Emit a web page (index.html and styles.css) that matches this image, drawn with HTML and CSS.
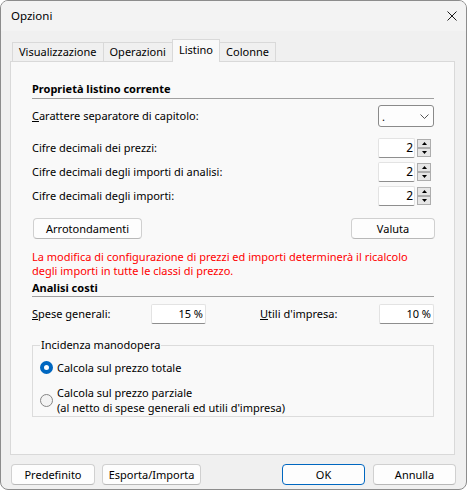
FILE: index.html
```html
<!DOCTYPE html>
<html lang="it">
<head>
<meta charset="utf-8">
<title>Opzioni</title>
<link rel="stylesheet" href="styles.css">
</head>
<body>
<div class="window">
  <div class="titlebar">
    <span class="title">Opzioni</span>
    <span class="close"><svg width="10" height="10" viewBox="0 0 10 10"><path d="M0.5 0.5L9.5 9.5M9.5 0.5L0.5 9.5" stroke="#1a1a1a" stroke-width="1"/></svg></span>
  </div>
  <div class="client">
    <div class="tabs">
      <div class="tab">Visualizzazione</div>
      <div class="tab">Operazioni</div>
      <div class="tab active">Listino</div>
      <div class="tab">Colonne</div>
    </div>
    <div class="panel">
      <div class="section-title">Proprietà listino corrente</div>
      <div class="row row-combo">
        <span><u>C</u>arattere separatore di capitolo:</span>
        <div class="combo"><span class="combo-value">.</span><svg width="9" height="5" viewBox="0 0 9 5"><path d="M0.5 0.5L4.5 4.5L8.5 0.5" fill="none" stroke="#555" stroke-width="1"/></svg></div>
      </div>
      <div class="spin-rows">
        <div class="row">
          <span>Cifre decimali dei prezzi:</span>
          <div class="spin"><div class="field spin-input">2</div><div class="spin-btns"><div class="spin-btn"><svg width="5" height="3" viewBox="0 0 5 3"><path d="M2.5 0L5 3H0Z" fill="#000"/></svg></div><div class="spin-btn"><svg width="5" height="3" viewBox="0 0 5 3"><path d="M0 0H5L2.5 3Z" fill="#000"/></svg></div></div></div>
        </div>
        <div class="row">
          <span>Cifre decimali degli importi di analisi:</span>
          <div class="spin"><div class="field spin-input">2</div><div class="spin-btns"><div class="spin-btn"><svg width="5" height="3" viewBox="0 0 5 3"><path d="M2.5 0L5 3H0Z" fill="#000"/></svg></div><div class="spin-btn"><svg width="5" height="3" viewBox="0 0 5 3"><path d="M0 0H5L2.5 3Z" fill="#000"/></svg></div></div></div>
        </div>
        <div class="row">
          <span>Cifre decimali degli importi:</span>
          <div class="spin"><div class="field spin-input">2</div><div class="spin-btns"><div class="spin-btn"><svg width="5" height="3" viewBox="0 0 5 3"><path d="M2.5 0L5 3H0Z" fill="#000"/></svg></div><div class="spin-btn"><svg width="5" height="3" viewBox="0 0 5 3"><path d="M0 0H5L2.5 3Z" fill="#000"/></svg></div></div></div>
        </div>
      </div>
      <div class="row row-buttons">
        <button class="btn btn-arr">Arrotondamenti</button>
        <button class="btn btn-valuta">Valuta</button>
      </div>
      <p class="warning">La modifica di configurazione di prezzi ed importi determinerà il ricalcolo<br>degli importi in tutte le classi di prezzo.</p>
      <div class="section-title section-analisi">Analisi costi</div>
      <div class="costs">
        <span><u>S</u>pese generali:</span>
        <div class="field pct">15 %</div>
        <span></span>
        <span><u>U</u>tili d'impresa:</span>
        <div class="field pct">10 %</div>
      </div>
      <fieldset class="group">
        <legend>Incidenza manodopera</legend>
        <div class="radio-row">
          <span class="radio checked"></span>
          <span class="radio-label">Calcola sul prezzo totale</span>
        </div>
        <div class="radio-row">
          <span class="radio"></span>
          <span class="radio-label">Calcola sul prezzo parziale<br>(al netto di spese generali ed utili d'impresa)</span>
        </div>
      </fieldset>
    </div>
    <div class="footer">
      <div class="footer-left">
        <button class="btn btn-pre">Predefinito</button>
        <button class="btn btn-esp">Esporta/Importa</button>
      </div>
      <div class="footer-right">
        <button class="btn btn-ok">OK</button>
        <button class="btn btn-ann">Annulla</button>
      </div>
    </div>
  </div>
</div>
</body>
</html>
```

FILE: styles.css
```css
* { box-sizing: border-box; }
html, body { margin: 0; padding: 0; background: #ffffff; }
body {
  font-family: "Noto Sans", "Open Sans", sans-serif;
  font-size: 11px;
  line-height: 16px;
  color: #000;
}
.window {
  width: 467px;
  height: 490px;
  border: 1px solid #8c8c8c;
  border-radius: 8px;
  background: #f0f0f0;
  overflow: hidden;
  display: flex;
  flex-direction: column;
}
.titlebar {
  height: 30px;
  flex: none;
  display: flex;
  align-items: center;
  justify-content: space-between;
  padding: 0 9px 0 10px;
  background: #f3f3f3;
}
.title { font-size: 11.5px; }
.close { display: flex; }
.client {
  flex: 1;
  display: flex;
  flex-direction: column;
  padding: 8px 11px 4px 9px;
}
.tabs {
  display: flex;
  align-items: flex-end;
  height: 22px;
  padding-left: 2px;
}
.tab {
  height: 19px;
  padding: 2px 6px 1px;
  line-height: 14px;
  border: 1px solid #d9d9d9;
  border-bottom: none;
  margin-right: -1px;
  background: #f0f0f0;
}
.tab.active {
  height: 23px;
  margin-bottom: -1px;
  padding-top: 3px;
  background: #f9f9f9;
  position: relative;
  z-index: 1;
}
.panel {
  flex: 1;
  background: #f9f9f9;
  border: 1px solid #d9d9d9;
  padding: 19px 20px 0 21px;
}
.section-title {
  font-weight: bold;
  height: 18px;
  padding-bottom: 1px;
  border-bottom: 1px solid #a0a0a0;
}
.row {
  display: flex;
  align-items: center;
  justify-content: space-between;
}
.row-combo {
  margin-top: 6px;
  height: 22px;
}
.combo {
  width: 56px;
  height: 22px;
  border: 1px solid #8a8a8a;
  border-radius: 3px;
  background: #fdfdfd;
  display: flex;
  align-items: center;
  justify-content: space-between;
  padding: 0 4px 0 3px;
}
.combo-value { line-height: 14px; margin-top: 2px; }
.spin-rows {
  margin-top: 11px;
  display: flex;
  flex-direction: column;
  gap: 4px;
}
.spin-rows .row { height: 20px; }
.spin {
  display: flex;
  align-items: center;
  gap: 2px;
  margin-right: 3px;
}
.field {
  height: 20px;
  background: #fff;
  border: 1px solid #e3e3e3;
  border-bottom-color: #8e8e8e;
  border-radius: 2px;
  text-align: right;
  line-height: 18px;
  padding-right: 2px;
}
.spin-input {
  width: 37px;
  font-size: 12px;
  padding-right: 1px;
}
.spin-btns {
  display: flex;
  flex-direction: column;
}
.spin-btn {
  width: 14px;
  height: 9px;
  border: 1px solid #adadad;
  background: #e6e6e6;
  display: flex;
  align-items: center;
  justify-content: center;
}
.spin-btn svg { display: block; }
.btn {
  font: inherit;
  color: #000;
  height: 21px;
  padding: 0;
  background: #fdfdfd;
  border: 1px solid #d0d0d0;
  border-bottom-color: #b8b8b8;
  border-radius: 4px;
  line-height: 18px;
}
.row-buttons {
  margin: 12px -1px 0 1px;
}
.btn-arr { width: 109px; }
.btn-valuta { width: 84px; }
.warning {
  margin: 11px 0 0;
  color: #f00;
  line-height: 14px;
}
.section-analisi {
  margin-top: 2px;
  height: 17px;
}
.costs {
  margin-top: 7px;
  display: grid;
  grid-template-columns: 119px 55px 54px 119px 55px;
  align-items: center;
}
.pct { width: 55px; }
.group {
  margin: 13px 0 0;
  padding: 7px 7px 1px 7px;
  border: 1px solid #dcdcdc;
}
.group legend {
  padding: 0 1px;
  line-height: 16px;
}
.radio-row {
  display: flex;
  align-items: center;
  gap: 4px;
  line-height: 15px;
}
.radio-row + .radio-row { margin-top: 10px; }
.radio {
  width: 13px;
  height: 13px;
  border-radius: 50%;
  border: 1px solid #858585;
  background: #f3f3f3;
  flex: none;
}
.radio.checked {
  border: 4px solid #0067c0;
  background: #fff;
}
.footer {
  margin-top: 9px;
  display: flex;
  justify-content: space-between;
  padding-left: 1px;
  margin-right: -1px;
}
.footer-left { display: flex; gap: 7px; }
.footer-right { display: flex; gap: 8px; }
.btn-pre { width: 84px; }
.btn-esp { width: 99px; }
.btn-ok { width: 83px; border: 1px solid #0067c0; }
.btn-ann { width: 83px; }
```
